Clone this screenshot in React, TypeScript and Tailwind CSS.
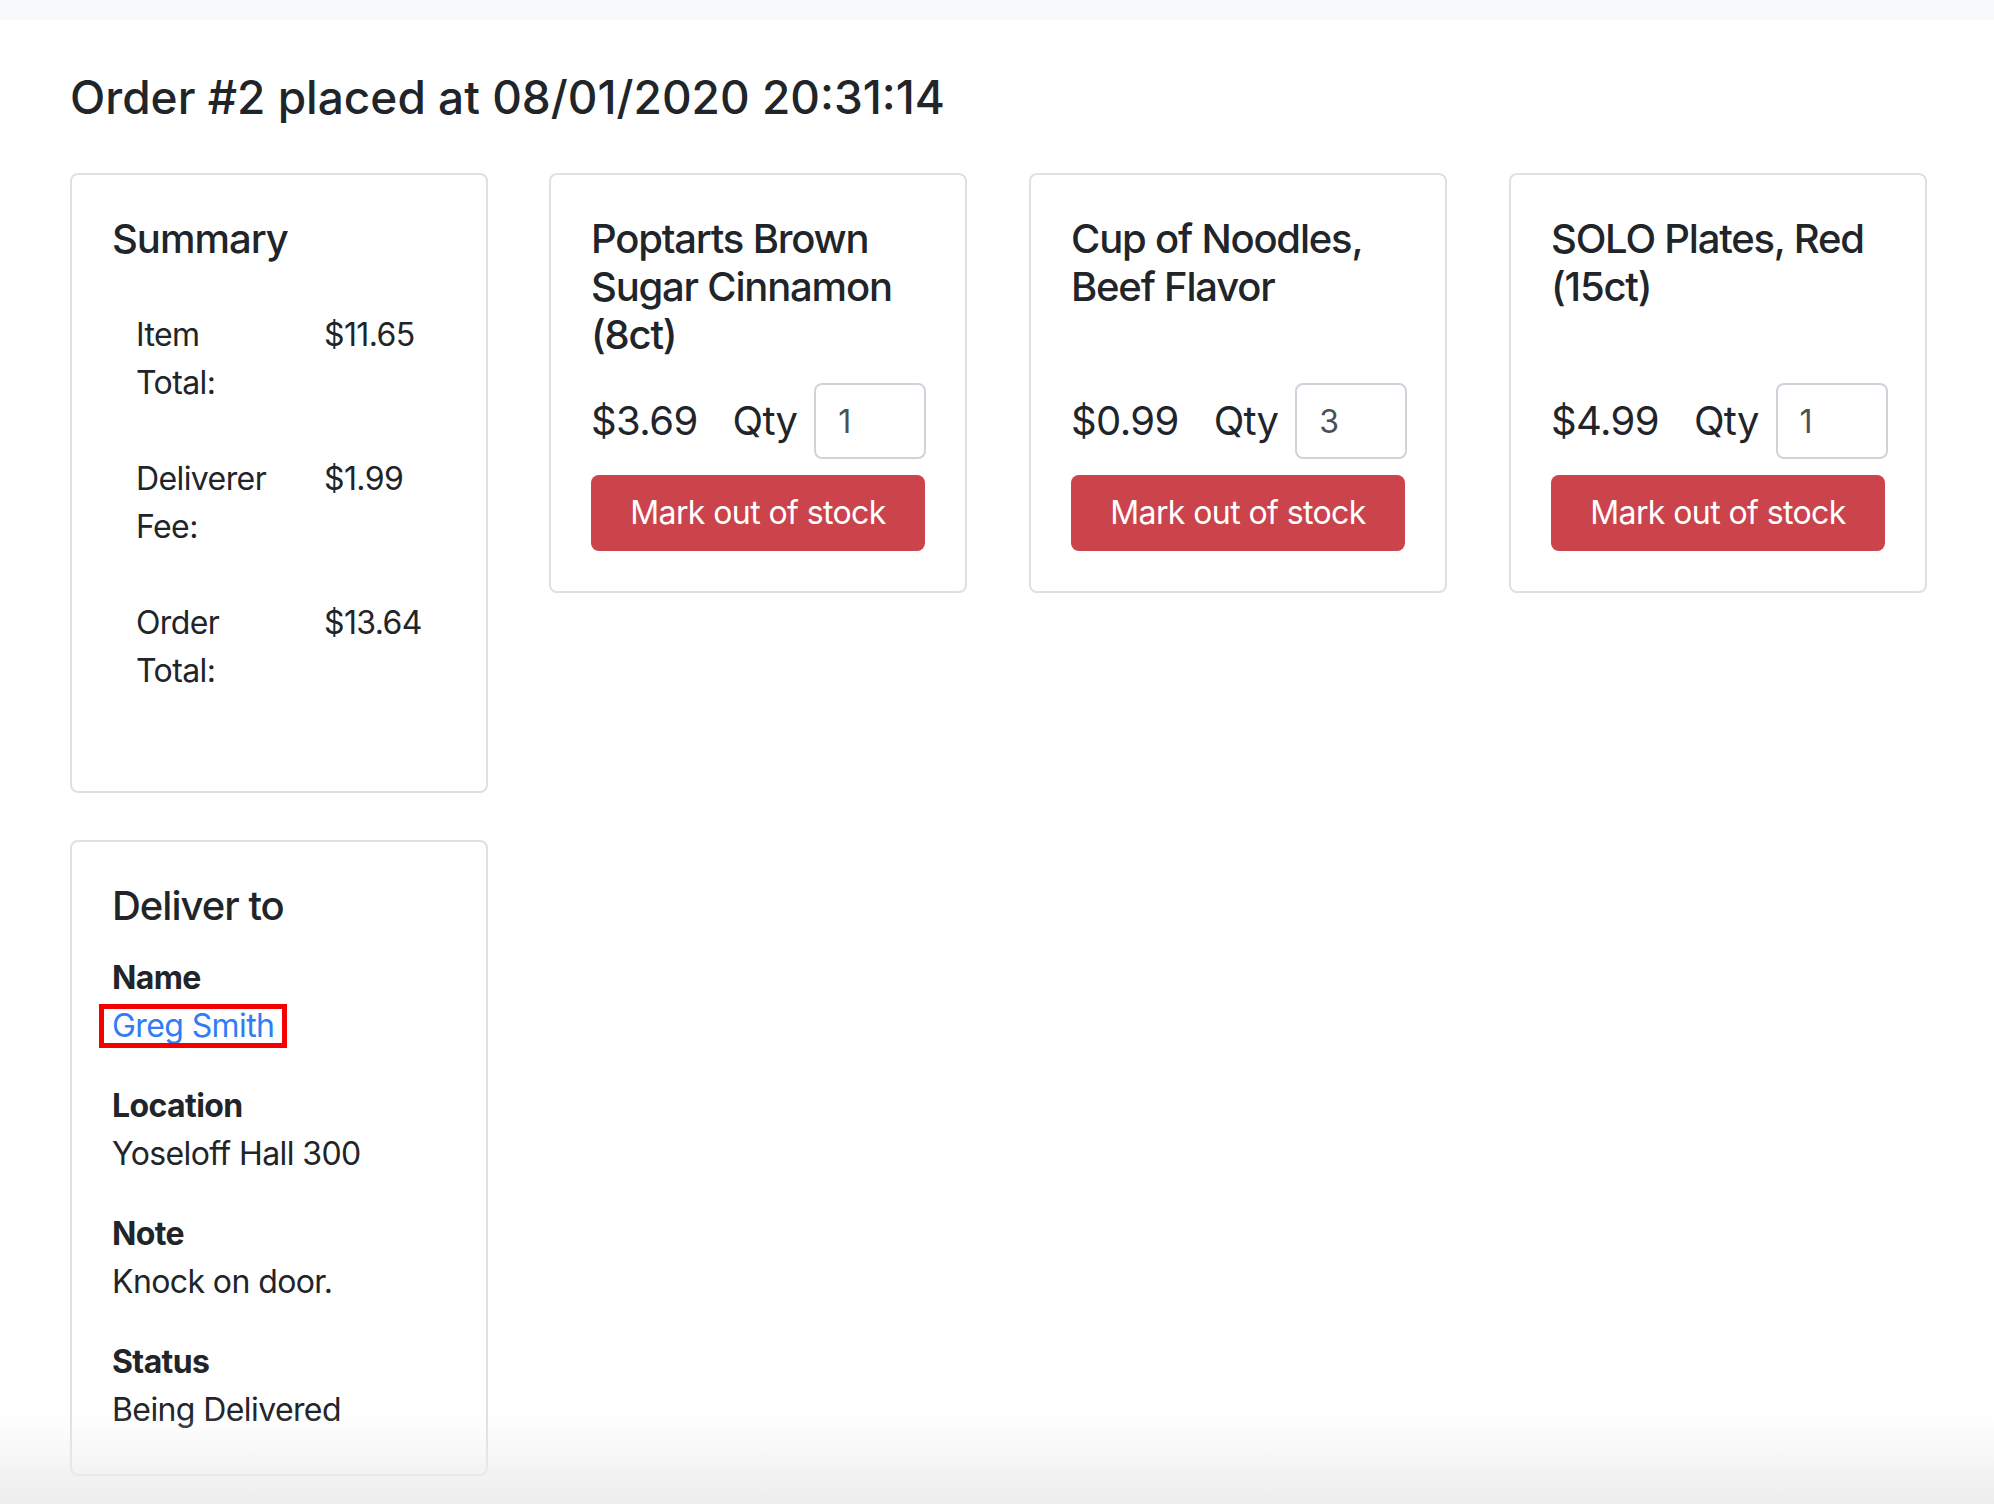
import React from 'react'

interface Item {
  name: string
  price: string
  qty: number
}

const items: Item[] = [
  { name: 'Poptarts Brown Sugar Cinnamon (8ct)', price: '$3.69', qty: 1 },
  { name: 'Cup of Noodles, Beef Flavor', price: '$0.99', qty: 3 },
  { name: 'SOLO Plates, Red (15ct)', price: '$4.99', qty: 1 },
]

const summary = [
  { label: 'Item Total:', value: '$11.65' },
  { label: 'Deliverer Fee:', value: '$1.99' },
  { label: 'Order Total:', value: '$13.64' },
]

function ItemCard({ item }: { item: Item }) {
  return (
    <div className="flex flex-col rounded-[8px] border-2 border-[#e0e0e0] bg-white p-[40px]">
      <h5 className="mb-[24px] text-[40px] font-medium leading-[48px] tracking-[-1.2px]">{item.name}</h5>
      <div className="mt-auto">
        <div className="flex items-center">
          <span className="text-[40px] leading-[48px] tracking-[-0.6px]">{item.price}</span>
          <span className="ml-[35px] text-[40px] leading-[48px] tracking-[-0.8px]">Qty</span>
          <input
            type="text"
            defaultValue={item.qty}
            className="ml-[17px] h-[76px] w-[112px] rounded-[8px] border-2 border-[#ced4da] bg-white px-[22px] text-[32px] text-[#495057] outline-none"
          />
        </div>
        <button className="mt-[16px] h-[76px] w-full rounded-[8px] bg-[#cb444b] text-[32px] tracking-[-0.6px] text-white">
          Mark out of stock
        </button>
      </div>
    </div>
  )
}

export default function App() {
  return (
    <div
      className="relative min-h-[1504px] overflow-hidden bg-white text-[#212529]"
      style={{ fontFamily: 'Inter, "Noto Sans", sans-serif' }}
    >
      <div className="h-[20px] bg-[#f8f9fa]" />

      <div className="px-[70px]">
        <h3 className="mb-[42px] mt-[44px] text-[46px] font-medium leading-[67px]">
          Order #2 placed at 08/01/2020 20:31:14
        </h3>

        <div className="flex items-start gap-[61px]">
          {/* Left column */}
          <div className="flex w-[418px] flex-col gap-[47px]">
            <div className="rounded-[8px] border-2 border-[#e0e0e0] bg-white p-[40px]">
              <h5 className="mb-[24px] text-[40px] font-medium leading-[48px] tracking-[-1px]">Summary</h5>
              <div className="mb-[32px] grid grid-cols-[188px_146px] text-[32px] leading-[48px] tracking-[-0.6px]">
                {summary.map((row) => (
                  <React.Fragment key={row.label}>
                    <div className="p-[24px]">{row.label}</div>
                    <div className="p-[24px]">{row.value}</div>
                  </React.Fragment>
                ))}
              </div>
            </div>

            <div className="rounded-[8px] border-2 border-[#e0e0e0] bg-white p-[40px] text-[32px] leading-[48px] tracking-[-0.6px]">
              <h5 className="mb-[24px] text-[40px] font-medium leading-[48px] tracking-[-1px]">Deliver to</h5>
              <div className="font-bold">Name</div>
              <p className="mb-[32px]">
                <span className="relative inline-block leading-[48px] text-[#2f7df6]">
                  Greg Smith
                  <span className="pointer-events-none absolute -left-[13px] -right-[13px] top-[2px] bottom-[2px] border-[5px] border-[#f50000]" />
                </span>
              </p>
              <div className="font-bold">Location</div>
              <p className="mb-[32px]">Yoseloff Hall 300</p>
              <div className="font-bold">Note</div>
              <p className="mb-[32px]">Knock on door.</p>
              <div className="font-bold">Status</div>
              <p>Being Delivered</p>
            </div>
          </div>

          {/* Items */}
          <div className="grid grid-cols-[repeat(3,418px)] gap-[62px]">
            {items.map((item) => (
              <ItemCard key={item.name} item={item} />
            ))}
          </div>
        </div>
      </div>

      <div className="pointer-events-none absolute inset-x-0 bottom-0 h-[90px] bg-gradient-to-b from-transparent to-[#ededed]" />
    </div>
  )
}
